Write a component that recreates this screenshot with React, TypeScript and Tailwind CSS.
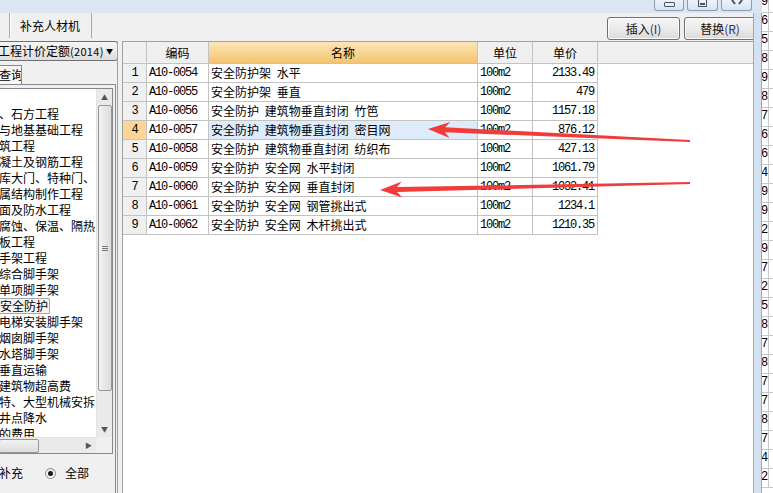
import React from 'react'

const rows = [
  { code: 'A10-0054', name: '安全防护架 水平', unit: '100m2', price: '2133.49' },
  { code: 'A10-0055', name: '安全防护架 垂直', unit: '100m2', price: '479' },
  { code: 'A10-0056', name: '安全防护 建筑物垂直封闭 竹笆', unit: '100m2', price: '1157.18' },
  { code: 'A10-0057', name: '安全防护 建筑物垂直封闭 密目网', unit: '100m2', price: '876.12' },
  { code: 'A10-0058', name: '安全防护 建筑物垂直封闭 纺织布', unit: '100m2', price: '427.13' },
  { code: 'A10-0059', name: '安全防护 安全网 水平封闭', unit: '100m2', price: '1061.79' },
  { code: 'A10-0060', name: '安全防护 安全网 垂直封闭', unit: '100m2', price: '1032.41' },
  { code: 'A10-0061', name: '安全防护 安全网 钢管挑出式', unit: '100m2', price: '1234.1' },
  { code: 'A10-0062', name: '安全防护 安全网 木杆挑出式', unit: '100m2', price: '1210.35' },
]

const treeItems = [
  '',
  '、石方工程',
  '与地基基础工程',
  '筑工程',
  '凝土及钢筋工程',
  '库大门、特种门、',
  '属结构制作工程',
  '面及防水工程',
  '腐蚀、保温、隔热',
  '板工程',
  '手架工程',
  '综合脚手架',
  '单项脚手架',
  '安全防护',
  '电梯安装脚手架',
  '烟囱脚手架',
  '水塔脚手架',
  '垂直运输',
  '建筑物超高费',
  '特、大型机械安拆',
  '井点降水',
  '的费用',
]

const sheetDigits = '96589876649929725878778742'.split('')

const mono = "font-['Liberation_Mono',monospace] text-[12px] tracking-[-1.2px]"

function WinButton({ children, w }: { children: React.ReactNode; w: string }) {
  return (
    <div
      className={`${w} h-[11px] border border-t-0 border-[#8b9bb0] rounded-b-[3px] bg-linear-to-b from-[#eef3f9] to-[#d9e3ef] flex justify-center items-start`}
    >
      {children}
    </div>
  )
}

function ActionButton({ label, key2 }: { label: string; key2: string }) {
  return (
    <div className="h-[23px] border border-[#707070] rounded-[3px] bg-linear-to-b from-[#f6f6f6] via-[#ebebeb] to-[#d9d9d9] shadow-[inset_0_0_0_1px_#fcfcfc] flex items-center justify-center text-[12px] text-[#111]">
      {label}
      <span className="text-[#1d2f6e]">{key2}</span>
    </div>
  )
}

function Arrows() {
  return (
    <svg className="absolute left-0 top-0 pointer-events-none" width="773" height="493" viewBox="0 0 773 493">
      <polygon
        points="428,129 449.6,138 444.9,132.3 690,142 690,140 445.1,127.3 450.4,122"
        fill="#f23b3b"
      />
      <polygon
        points="380,190 402.2,197.5 397.1,192.1 690,184 690,182 396.9,187.1 401.8,181.5"
        fill="#f23b3b"
      />
    </svg>
  )
}

export default function App() {
  return (
    <div className="relative w-[773px] h-[493px] overflow-hidden flex bg-white font-['Noto_Sans_CJK_SC','Noto_Sans',sans-serif] text-[12px] text-black">
      {/* window */}
      <div className="w-[762px] flex flex-col shrink-0">
        {/* title bar */}
        <div className="h-[13px] bg-[#dbe6f2] flex justify-end items-start pr-[10px] gap-[3px]">
          <WinButton w="w-[30px]">
            <div className="mt-[2px] w-[11px] h-[5px] border border-[#4a5565] rounded-[1px]" />
          </WinButton>
          <WinButton w="w-[31px]">
            <div className="w-[9px] h-[7px] border border-[#4a5565] border-t-0 flex items-end justify-center pb-[1px]">
              <div className="w-[5px] h-[2px] border border-[#4a5565]" />
            </div>
          </WinButton>
          <WinButton w="w-[31px]">
            <svg width="12" height="6" viewBox="0 0 12 6">
              <path d="M1 0 L4 4 M11 0 L8 4" stroke="#4a5565" strokeWidth="2" />
            </svg>
          </WinButton>
        </div>

        <div className="flex-1 flex">
          <div className="w-[753px] flex flex-col bg-[#f0f0f0]">
            {/* toolbar */}
            <div className="h-[28px] flex items-start">
              <div className="ml-[9px] h-[25px] w-[83px] border-l border-r border-[#a9a9a9] shadow-[inset_1px_0_0_#fff] flex items-center pl-[10px] text-[12px]">
                补充人材机
              </div>
              <div className="ml-auto mt-[4px] flex gap-[4px]">
                <div className="w-[73px]">
                  <ActionButton label="插入" key2="(I)" />
                </div>
                <div className="w-[72px] -mr-[3px]">
                  <ActionButton label="替换" key2="(R)" />
                </div>
              </div>
            </div>

            {/* main */}
            <div className="flex-1 flex">
              {/* left panel */}
              <div className="w-[118px] border-r border-[#a0a0a0] overflow-hidden flex flex-col">
                <div className="-ml-[8px] w-[126px] h-[20px] border border-[#707070] rounded-[3px] bg-linear-to-b from-[#f6f6f6] to-[#dedede] flex items-center text-[12px] whitespace-nowrap">
                  <span className="ml-[5px]">工程计价定额</span>
                  <span className="text-[11px] tracking-[0.3px]">(2014)</span>
                  <span className="ml-auto mr-[4px] text-[7px]">▼</span>
                </div>
                <div className="mt-[4px] h-[19px] w-[23px] border border-b-0 border-[#8a8a8a] bg-[#f6f6f6] flex items-center -ml-[1px] whitespace-nowrap overflow-hidden">
                  <span className="-ml-[1px]">查询</span>
                </div>
                <div className="flex-1 w-[116px] border-t border-r border-[#8a8a8a] bg-[#f0f0f0] flex flex-col pt-[3px]">
                  <div className="w-[114px] h-[366px] -ml-[1px] border border-[#828790] bg-white flex flex-col">
                    <div className="flex-1 flex min-h-0">
                      <div className="flex-1 overflow-hidden pt-[1px] whitespace-nowrap">
                        {treeItems.map((item, i) => (
                          <div key={i} className="h-[16px] leading-[16px] flex items-center">
                            {item === '安全防护' ? (
                              <span className="-ml-[2px] px-[1px] h-[16px] border border-[#a7a7a7] bg-[#f3f3f3] rounded-[1px] leading-[14px]">
                                {item}
                              </span>
                            ) : (
                              <span className="-ml-[1px]">{item}</span>
                            )}
                          </div>
                        ))}
                      </div>
                      {/* vertical scrollbar */}
                      <div className="w-[16px] bg-[#eaeaea] border-l border-[#e3e3e3] flex flex-col items-center">
                        <div className="h-[16px] flex items-center justify-center text-[7px] text-[#555]">▲</div>
                        <div className="w-[14px] h-[286px] border border-[#979797] rounded-[2px] bg-linear-to-r from-[#f3f3f3] to-[#dcdcdc] flex items-center justify-center">
                          <div className="flex flex-col gap-[1px]">
                            <div className="w-[6px] h-[1px] bg-[#777]" />
                            <div className="w-[6px] h-[1px] bg-[#777]" />
                            <div className="w-[6px] h-[1px] bg-[#777]" />
                          </div>
                        </div>
                        <div className="flex-1" />
                        <div className="h-[16px] flex items-center justify-center text-[7px] text-[#555]">▼</div>
                      </div>
                    </div>
                    {/* horizontal scrollbar */}
                    <div className="h-[16px] flex">
                      <div className="flex-1 bg-[#eaeaea] border-t border-[#e3e3e3] flex items-center">
                        <div className="w-[40px] h-[14px] border border-[#979797] rounded-[2px] bg-linear-to-b from-[#f3f3f3] to-[#dcdcdc] -ml-[1px]" />
                        <div className="ml-auto mr-[4px] text-[7px] text-[#555]">▶</div>
                      </div>
                      <div className="w-[16px] bg-[#f0f0f0]" />
                    </div>
                  </div>
                  <div className="h-[38px] flex items-center whitespace-nowrap">
                    <span className="-ml-[1px]">补充</span>
                    <div className="ml-[22px] w-[11px] h-[11px] rounded-full border border-[#8a8a8a] bg-linear-to-b from-[#e8e8e8] to-[#fafafa] flex items-center justify-center">
                      <div className="w-[5px] h-[5px] rounded-full bg-[#1a1a1a]" />
                    </div>
                    <span className="ml-[9px]">全部</span>
                  </div>
                </div>
              </div>

              {/* splitter */}
              <div className="w-[4px]" />

              {/* grid */}
              <div className="flex-1 border-l border-t border-[#a0a0a0] bg-white">
                <div className="flex h-[22px] border-b border-[#c3c3c3] bg-[#f0f0f0]">
                  <div className="w-[24px] border-r border-[#c3c3c3]" />
                  <div className="w-[62px] border-r border-[#c3c3c3] flex items-center justify-center">编码</div>
                  <div className="w-[269px] border-r border-[#c3c3c3] flex items-center justify-center bg-linear-to-b from-[#fce6b8] to-[#f4c46e]">
                    名称
                  </div>
                  <div className="w-[55px] border-r border-[#c3c3c3] flex items-center justify-center">单位</div>
                  <div className="w-[65px] border-r border-[#c3c3c3] flex items-center justify-center">单价</div>
                </div>
                {rows.map((row, i) => {
                  const sel = i === 3
                  return (
                    <div key={row.code} className="flex h-[19px]">
                      <div
                        className={`w-[24px] border-r border-b border-[#c3c3c3] flex items-center justify-center ${mono} ${sel ? 'bg-[#fdd596]' : 'bg-[#f0f0f0]'}`}
                      >
                        {i + 1}
                      </div>
                      <div className={`w-[62px] border-r border-b border-[#c3c3c3] flex items-center pl-[2px] ${mono}`}>
                        {row.code}
                      </div>
                      <div
                        className={`w-[269px] border-r border-b border-[#c3c3c3] flex items-center pl-[2px] whitespace-pre [word-spacing:3px] ${sel ? 'bg-[#ddebfb]' : ''}`}
                      >
                        {row.name}
                      </div>
                      <div className={`w-[55px] border-r border-b border-[#c3c3c3] flex items-center pl-[2px] ${mono}`}>
                        {row.unit}
                      </div>
                      <div className={`w-[65px] border-r border-b border-[#c3c3c3] flex items-center justify-end pr-[3px] ${mono}`}>
                        {row.price}
                      </div>
                    </div>
                  )
                })}
              </div>
            </div>
          </div>

          {/* frame strip */}
          <div className="w-[9px] bg-[#d4e1f0] border-l border-[#9aaabd] border-r border-[#4b5968]" />
        </div>
      </div>

      {/* spreadsheet behind the window */}
      <div className="flex-1 flex flex-col bg-white">
        {sheetDigits.map((d, i) => (
          <div
            key={i}
            className={`${i === 0 ? 'h-[13px]' : 'h-[19px]'} shrink-0 border-b border-[#c8c8c8] flex`}
          >
            <div className={`w-[7px] border-r border-[#c8c8c8] overflow-hidden flex items-end pb-[1px] ${mono}`}>
              <span className="-ml-[1px]">{d}</span>
            </div>
          </div>
        ))}
      </div>

      <Arrows />
    </div>
  )
}
